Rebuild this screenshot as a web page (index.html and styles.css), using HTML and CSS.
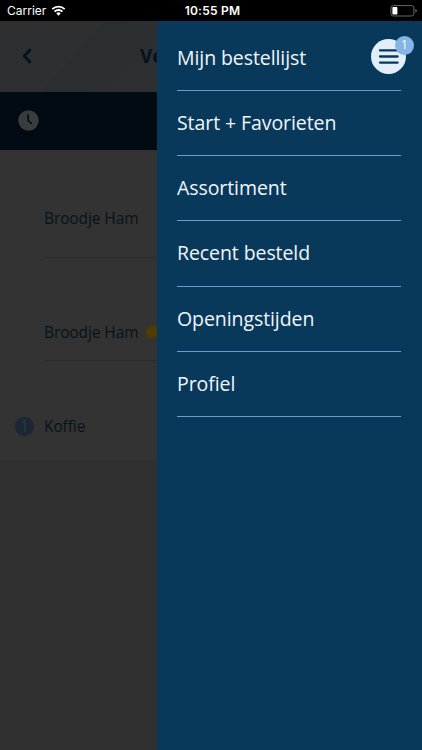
FILE: index.html
```
<!DOCTYPE html>
<html lang="nl">
<head>
  <meta charset="UTF-8">
  <meta name="viewport" content="width=device-width, initial-scale=1.0">
  <title>Bestellen</title>
  <link rel="stylesheet" href="styles.css">
</head>
<body>
  <div class="status-bar">
    <div class="carrier">
      <span>Carrier</span>
      <svg class="wifi" width="15" height="11" viewBox="0 0 14 11">
        <path d="M0.8 4.1a9 9 0 0 1 12.4 0" fill="none" stroke="#fff" stroke-width="1.9"/>
        <path d="M3 6.6a5.8 5.8 0 0 1 8 0" fill="none" stroke="#fff" stroke-width="1.8"/>
        <path d="M7 10.8L4.8 8.4a3.1 3.1 0 0 1 4.4 0z" fill="#fff"/>
      </svg>
    </div>
    <div class="time">10:55 PM</div>
    <div class="battery">
      <svg width="28" height="12" viewBox="0 0 28 12">
        <rect x="0.9" y="0.6" width="23" height="10.4" rx="2.4" fill="none" stroke="#666" stroke-width="1"/>
        <rect x="2.4" y="2.1" width="5" height="7.4" rx="0.8" fill="#fff"/>
        <path d="M25.3 3.9q1.6.5 1.6 1.9t-1.6 1.9z" fill="#666"/>
      </svg>
    </div>
  </div>

  <div class="screen">
    <div class="page">
      <header class="page-header">
        <svg class="back" width="10" height="16" viewBox="0 0 10 16">
          <path d="M7.7 2.2L2.2 8l5.5 5.8" fill="none" stroke="#06121e" stroke-width="3" stroke-linecap="round" stroke-linejoin="round"/>
        </svg>
        <h1>Ve</h1>
      </header>
      <div class="time-bar">
        <svg width="21" height="21" viewBox="0 0 20 20">
          <circle cx="10" cy="10" r="9.8" fill="#3b3c3d"/>
          <path d="M9.7 4v6.2l3.5 3" fill="none" stroke="#020b14" stroke-width="1.5"/>
        </svg>
      </div>
      <div class="list">
        <div class="item item-first">
          <span class="name">Broodje Ham</span>
        </div>
        <div class="item item-second">
          <span class="name">Broodje Ham</span>
          <svg class="star" width="15" height="14" viewBox="0 0 15 14">
            <circle cx="7.2" cy="7" r="5.8" fill="#4f3e00"/>
            <circle cx="7.2" cy="7" r="6.2" fill="none" stroke="#4f3e00" stroke-width="1.6" stroke-dasharray="1.62 1.62"/>
          </svg>
        </div>
        <div class="item item-last">
          <span class="count">1</span>
          <span class="name">Koffie</span>
        </div>
      </div>
    </div>

    <nav class="menu">
      <a class="menu-item">Mijn bestellijst</a>
      <a class="menu-item">Start + Favorieten</a>
      <a class="menu-item">Assortiment</a>
      <a class="menu-item">Recent besteld</a>
      <a class="menu-item">Openingstijden</a>
      <a class="menu-item">Profiel</a>
      <div class="menu-button">
        <svg width="35" height="35" viewBox="0 0 35 35">
          <circle cx="17.5" cy="17.5" r="17.5" fill="#e2eef8"/>
          <path d="M9 11.4h17.6M9 17.5h17.6M9 23.6h17.6" stroke="#09395a" stroke-width="2.3" stroke-linecap="round"/>
        </svg>
        <span class="badge">1</span>
      </div>
    </nav>
  </div>
</body>
</html>
```
FILE: styles.css
```
* {
  box-sizing: border-box;
}

body {
  margin: 0;
  height: 100vh;
  display: flex;
  flex-direction: column;
  overflow: hidden;
  background: #303030;
  font-family: "Open Sans", sans-serif;
}

.status-bar {
  height: 21px;
  flex: none;
  display: grid;
  grid-template-columns: 1fr auto 1fr;
  align-items: center;
  padding: 0 4px 0 7px;
  background: #000;
  color: #fff;
  font-family: Inter, sans-serif;
  font-size: 12px;
}

.carrier {
  display: flex;
  align-items: center;
  gap: 5px;
}

.time {
  font-weight: 600;
  letter-spacing: 0.25px;
}

.battery {
  display: flex;
  justify-content: flex-end;
}

.screen {
  position: relative;
  flex: 1;
}

.page-header {
  height: 71px;
  display: flex;
  align-items: center;
  padding: 0 0 2px 22px;
  background: linear-gradient(132deg, #2e2f30 0, #2e2f30 76px, #2b2e31 79px, #2e2f30 180px);
}

.page-header h1 {
  margin: 0 0 0 108px;
  font-size: 19px;
  font-weight: 700;
  color: #06121e;
}

.time-bar {
  height: 58px;
  display: flex;
  align-items: center;
  padding: 0 0 2px 18px;
  background: #020b14;
}

.list {
  height: 310px;
  background: #333;
  color: #08121d;
  font-size: 15.5px;
  letter-spacing: -0.1px;
}

.item {
  display: flex;
  align-items: center;
  margin-left: 44px;
}

.item-first {
  height: 108px;
  padding-top: 28px;
  border-bottom: 1px solid #282c31;
}

.item-second {
  height: 103px;
  padding-top: 45px;
  border-bottom: 1px solid #282c31;
}

.item-last {
  height: 99px;
  margin-left: 15px;
  padding-top: 31px;
}

.star {
  margin-left: 7px;
}

.count {
  width: 19px;
  height: 19px;
  margin-right: 10px;
  border-radius: 50%;
  background: #1b2733;
  color: #303a44;
  text-align: center;
  line-height: 19px;
}

.menu {
  position: absolute;
  top: 0;
  right: 0;
  bottom: 0;
  width: 265px;
  padding: 5px 21px 0 20px;
  background: #09395a;
}

.menu-item {
  height: 65.15px;
  display: flex;
  align-items: center;
  padding-bottom: 1px;
  border-bottom: 1px solid #689dcc;
  color: #f0f6fa;
  font-size: 19.5px;
  letter-spacing: -0.08px;
}

.menu-button {
  position: absolute;
  top: 18px;
  right: 16px;
  width: 35px;
  height: 35px;
}

.badge {
  position: absolute;
  top: -3px;
  right: -8px;
  width: 19px;
  height: 19px;
  border-radius: 50%;
  background: #84b5e6;
  color: #fff;
  font-size: 12px;
  line-height: 18px;
  text-align: center;
}
```
